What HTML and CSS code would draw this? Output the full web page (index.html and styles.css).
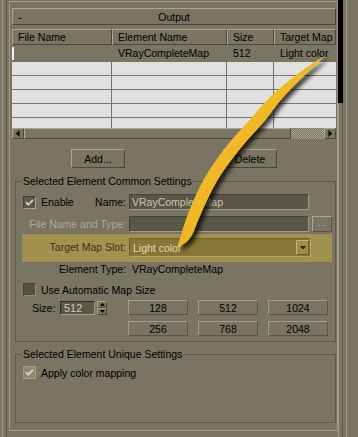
FILE: index.html
```html
<!DOCTYPE html>
<html>
<head>
<meta charset="utf-8">
<link rel="stylesheet" href="styles.css">
</head>
<body>
<div class="stage">
  <div class="edge-left"></div>
  <div class="rollout">
    <div class="roll-head"><span class="minus">-</span><span class="roll-title">Output</span><span class="roll-spacer"></span></div>
    <div class="list">
      <div class="lhead">
        <div class="hc w1">File Name</div>
        <div class="hc w2">Element Name</div>
        <div class="hc w3">Size</div>
        <div class="hc w4">Target Map</div>
      </div>
      <div class="lbody">
        <div class="lrow sel">
          <div class="cell w1"><span class="focus"></span></div>
          <div class="cell w2">VRayCompleteMap</div>
          <div class="cell w3">512</div>
          <div class="cell w4">Light color</div>
        </div>
        <div class="lrow empty"><div class="cell w1"></div><div class="cell w2"></div><div class="cell w3"></div><div class="cell w4"></div></div>
        <div class="lrow empty"><div class="cell w1"></div><div class="cell w2"></div><div class="cell w3"></div><div class="cell w4"></div></div>
        <div class="lrow empty"><div class="cell w1"></div><div class="cell w2"></div><div class="cell w3"></div><div class="cell w4"></div></div>
        <div class="lrow empty"><div class="cell w1"></div><div class="cell w2"></div><div class="cell w3"></div><div class="cell w4"></div></div>
        <div class="lrow empty"><div class="cell w1"></div><div class="cell w2"></div><div class="cell w3"></div><div class="cell w4"></div></div>
      </div>
      <div class="hscroll">
        <div class="sb-btn"><svg width="4" height="7" viewBox="0 0 4 7"><path d="M3.5 0 L0 3.5 L3.5 7Z" fill="#000"/></svg></div>
        <div class="sb-thumb"></div>
        <div class="sb-track"></div>
        <div class="sb-btn"><svg width="4" height="7" viewBox="0 0 4 7"><path d="M0.5 0 L4 3.5 L0.5 7Z" fill="#000"/></svg></div>
      </div>
    </div>
    <div class="btn-row"><div class="btn big">Add...</div><div class="btn big">Delete</div></div>

    <div class="group g1">
      <div class="glabel">Selected Element Common Settings</div>
      <div class="frow">
        <div class="lab between"><span class="chk-item"><span class="chk on"><svg width="11" height="11" viewBox="0 0 11 11"><path d="M2 5.2 L4.3 7.6 L9 2.8" fill="none" stroke="#d3cfbd" stroke-width="1.9"/></svg></span>Enable</span><span>Name:</span></div>
        <div class="tb">VRayCompleteMap</div>
      </div>
      <div class="frow gap6">
        <div class="lab dis">File Name and Type:</div>
        <div class="tb"></div>
        <div class="btn dots">...</div>
      </div>
      <div class="band">
        <div class="lab band-lab">Target Map Slot:</div>
        <div class="dd"><span class="dd-text">Light color</span><span class="dd-btn"><svg width="6" height="4" viewBox="0 0 6 4"><path d="M0 0 L6 0 L3 3.5Z" fill="#2a2412"/></svg></span></div>
      </div>
      <div class="trow"><div class="lab tlab">Element Type:</div><div class="val">VRayCompleteMap</div></div>
      <div class="chk-row auto"><span class="chk off"></span>Use Automatic Map Size</div>
      <div class="size-row">
        <div class="size-left">
          <span class="size-lab">Size:</span>
          <div class="spin-field">512</div>
          <div class="spin">
            <span class="sp"><svg width="5" height="3" viewBox="0 0 5 3"><path d="M2.5 0 L5 3 L0 3Z" fill="#000"/></svg></span>
            <span class="sp"><svg width="5" height="3" viewBox="0 0 5 3"><path d="M0 0 L5 0 L2.5 3Z" fill="#000"/></svg></span>
          </div>
        </div>
        <div class="size-grid">
          <div class="btn sz">128</div>
          <div class="btn sz">512</div>
          <div class="btn sz">1024</div>
          <div class="btn sz">256</div>
          <div class="btn sz">768</div>
          <div class="btn sz">2048</div>
        </div>
      </div>
    </div>

    <div class="group g2">
      <div class="glabel">Selected Element Unique Settings</div>
      <div class="chk-row apply"><span class="chk on light"><svg width="11" height="11" viewBox="0 0 11 11"><path d="M2 5.2 L4.3 7.6 L9 2.8" fill="none" stroke="#d6d1bc" stroke-width="1.9"/></svg></span>Apply color mapping</div>
    </div>
  </div>
  <div class="vscroll"><div class="vthumb"></div><div class="vtrack"></div></div>
  <div class="edge-right"></div>

  <svg class="arrow" width="358" height="437" viewBox="0 0 358 437">
    <defs>
      <linearGradient id="ag" x1="0" y1="0" x2="1" y2="1">
        <stop offset="0" stop-color="#f7c73e"/>
        <stop offset="0.6" stop-color="#efb321"/>
        <stop offset="1" stop-color="#e0a312"/>
      </linearGradient>
      <filter id="sh" x="-30%" y="-10%" width="160%" height="130%">
        <feDropShadow dx="4" dy="3" stdDeviation="2.2" flood-color="#000" flood-opacity="0.75"/>
      </filter>
    </defs>
    <path d="M325 56 L314.75 65.5 Q304.5 75 292.25 87.5 Q280 100 273 110 Q266 120 256.5 130 Q247 140 239 150 Q231 160 224 170 Q217 180 212 190 Q207 200 202.5 210 Q198 220 194.25 230 Q190.5 240 183.5 244 L177 248 L179.5 240 L182.5 230 Q185.5 220 189.5 210 Q193.5 200 198.25 190 Q203 180 209.5 170 Q216 160 223.5 150 Q231 140 240.5 130 Q250 120 258 110 Q266 100 280.75 87.5 Q295.5 75 308 66.5 Q320.5 58 325 56 Z" fill="url(#ag)" filter="url(#sh)"/>
  </svg>
</div>
</body>
</html>
```
FILE: styles.css
```css
html, body {
  margin: 0;
  padding: 0;
}
body {
  background: #7a7462;
  font-family: "Liberation Sans", Arial, sans-serif;
  font-size: 10.5px;
  color: #000;
  overflow: hidden;
}
.stage {
  position: relative;
  width: 358px;
  height: 437px;
  display: flex;
  align-items: flex-start;
}
.edge-left {
  width: 3px;
  height: 437px;
  margin: 0 2px;
  border-left: 1px solid #a29c86;
  border-right: 1px solid #5e594a;
}
.rollout {
  box-sizing: border-box;
  width: 329px;
  height: 430px;
  margin-top: 1px;
  border: 1px solid #a29c86;
  padding: 0 1px 0 2px;
  display: flex;
  flex-direction: column;
}
.raised, .roll-head, .hc, .btn, .sb-btn, .sb-thumb, .sp, .dd-btn {
  border-style: solid;
  border-width: 1px;
  border-color: #aca690 #4c483c #4c483c #aca690;
}
.roll-head {
  box-sizing: border-box;
  height: 17px;
  margin-top: 6px;
  display: flex;
  align-items: center;
  padding: 0 5px;
}
.minus { width: 10px; }
.roll-title { flex: 1; text-align: center; }
.roll-spacer { width: 10px; }

.list {
  margin-top: 4px;
  width: 324px;
}
.lhead { display: flex; height: 16px; }
.w1 { width: 100px; }
.w2 { width: 115px; }
.w3 { width: 47px; }
.w4 { width: 62px; }
.hc {
  box-sizing: border-box;
  height: 16px;
  line-height: 14px;
  padding-left: 5px;
  white-space: nowrap;
  overflow: hidden;
}
.lbody {
  height: 83px;
  overflow: hidden;
}
.lrow { display: flex; }
.cell {
  box-sizing: border-box;
  white-space: nowrap;
  overflow: hidden;
}
.sel { height: 16px; line-height: 16px; }
.sel .cell { padding-left: 6px; }
.sel .w1 { padding-left: 0; }
.focus {
  display: block;
  width: 2px;
  height: 13px;
  margin-top: 2px;
  background: #f2f2f2;
}
.empty {
  box-sizing: border-box;
  height: 14px;
  border-top: 1px solid #7a7462;
  background: #e1e1e1;
}
.empty .cell { border-right: 1px solid #7a7462; }
.empty .w4 { border-right: none; }

.hscroll {
  display: flex;
  height: 11px;
}
.sb-btn {
  box-sizing: border-box;
  width: 12px;
  height: 11px;
  display: flex;
  align-items: center;
  justify-content: center;
}
.sb-thumb {
  box-sizing: border-box;
  width: 267px;
  height: 11px;
}
.sb-track {
  width: 33px;
  height: 11px;
  background: repeating-conic-gradient(#aca690 0 25%, #7a7462 0 50%) 0 0 / 2px 2px;
}

.btn {
  box-sizing: border-box;
  display: flex;
  align-items: center;
  justify-content: center;
}
.btn-row {
  display: flex;
  justify-content: center;
  gap: 98px;
  width: 324px;
  margin-top: 10px;
}
.big { width: 54px; height: 19px; }

.group {
  box-sizing: border-box;
  width: 321px;
  margin-left: 3px;
  border: 1px solid #5f5a4b;
  display: flex;
  flex-direction: column;
}
.g1 { margin-top: 13px; padding-bottom: 5px; }
.g2 { margin-top: 12px; height: 69px; }
.glabel {
  align-self: flex-start;
  margin-top: -7px;
  margin-left: 6px;
  padding: 0 1px;
  line-height: 13px;
  background: #7a7462;
  white-space: nowrap;
}
.frow {
  display: flex;
  align-items: center;
  height: 16px;
  margin-top: 6px;
}
.lab {
  width: 110px;
  flex-shrink: 0;
  margin-right: 3px;
  text-align: right;
  white-space: nowrap;
}
.between {
  display: flex;
  justify-content: space-between;
  align-items: center;
  padding-left: 7px;
  box-sizing: border-box;
}
.chk-item { display: flex; align-items: center; }
.chk {
  box-sizing: border-box;
  width: 13px;
  height: 13px;
  margin-right: 5px;
  flex-shrink: 0;
  background: #5c5849;
  border-style: solid;
  border-width: 1px;
  border-color: #46423a #a8a28c #a8a28c #46423a;
  display: flex;
  align-items: center;
  justify-content: center;
}
.chk.off { background: #55513f; border-color: #46423a #8f8975 #8f8975 #46423a; }
.chk.light { background: #8e8873; border-color: #9e9882 #a8a28c #a8a28c #9e9882; }
.tb {
  box-sizing: border-box;
  width: 180px;
  height: 16px;
  background: #5a5648;
  border-style: solid;
  border-width: 1px;
  border-color: #45413a #a29c86 #a29c86 #45413a;
  color: #c8c4b3;
  line-height: 14px;
  padding-left: 2px;
  white-space: nowrap;
}
.dis { color: #aea995; }
.dots {
  width: 20px;
  height: 16px;
  margin-left: 3px;
  color: #b3ae9a;
  align-items: flex-end;
  padding-bottom: 3px;
  border-color: #aca690 #5c5849 #5c5849 #aca690;
}
.band {
  box-sizing: border-box;
  display: flex;
  align-items: flex-start;
  width: 310px;
  height: 28px;
  margin: 2px 0 0 6px;
  padding-top: 4px;
  background: #a3924f;
}
.band-lab {
  width: 104px;
  line-height: 19px;
  color: #3a3320;
}
.dd {
  box-sizing: border-box;
  width: 182px;
  height: 19px;
  display: flex;
  align-items: center;
  background: #867638;
  border-style: solid;
  border-width: 1px;
  border-color: #6f612c #b5a565 #b5a565 #6f612c;
  padding: 0 1px 0 3px;
}
.dd-text {
  flex: 1;
  color: #e3d9b1;
}
.dd-btn {
  box-sizing: border-box;
  width: 13px;
  height: 15px;
  background: #9d8c4a;
  border-color: #c2b274 #6c5e2a #6c5e2a #c2b274;
  display: flex;
  align-items: center;
  justify-content: center;
}
.trow {
  display: flex;
  align-items: center;
  height: 13px;
}
.tlab { margin-right: 6px; }
.val { white-space: nowrap; }
.chk-row {
  display: flex;
  align-items: center;
  height: 15px;
  padding-left: 7px;
  white-space: nowrap;
}
.auto { margin-top: 7px; }
.apply { margin-top: 4px; }
.size-row {
  display: flex;
  align-items: flex-start;
  margin-top: 3px;
}
.size-left {
  box-sizing: border-box;
  width: 112px;
  height: 15px;
  padding-left: 16px;
  display: flex;
  align-items: center;
}
.size-lab { width: 28px; }
.spin-field {
  box-sizing: border-box;
  width: 35px;
  height: 14px;
  background: #5a5648;
  border-style: solid;
  border-width: 1px;
  border-color: #2f2c25 #a29c86 #a29c86 #2f2c25;
  color: #cfcbba;
  line-height: 12px;
  padding-left: 3px;
  font-size: 11px;
}
.spin {
  margin-left: 2px;
  display: flex;
  flex-direction: column;
}
.sp {
  box-sizing: border-box;
  width: 10px;
  height: 7px;
  display: flex;
  align-items: center;
  justify-content: center;
}
.size-grid {
  display: grid;
  grid-template-columns: 60px 60px 60px;
  grid-auto-rows: 15px;
  column-gap: 10px;
  row-gap: 6px;
}
.sz {
  border-color: #a29c86 #59554a #59554a #a29c86;
}

.vscroll {
  width: 5px;
  height: 437px;
  display: flex;
  flex-direction: column;
}
.vthumb { height: 103px; background: #000; }
.vtrack {
  flex: 1;
  border-left: 1px solid #a29c86;
  border-right: 1px solid #5e594a;
}
.edge-right {
  width: 11px;
  height: 437px;
  margin-left: 3px;
  border-left: 1px solid #a29c86;
}
.arrow {
  position: absolute;
  left: 0;
  top: 0;
  pointer-events: none;
}
```
